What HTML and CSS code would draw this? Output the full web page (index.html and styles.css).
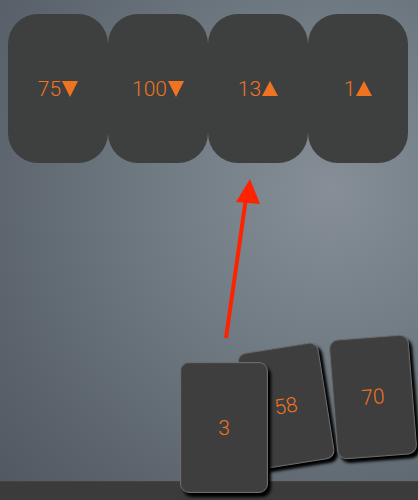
FILE: index.html
```html
<!DOCTYPE html>
<html>
<head>
<meta charset="utf-8">
<link rel="stylesheet" href="styles.css">
</head>
<body>
<div class="table">
  <div class="slots">
    <div class="slot"><span class="num">75</span><span class="tri down"></span></div>
    <div class="slot"><span class="num">100</span><span class="tri down"></span></div>
    <div class="slot"><span class="num">13</span><span class="tri up"></span></div>
    <div class="slot"><span class="num">1</span><span class="tri up"></span></div>
  </div>
  <svg class="arrow" width="418" height="500" viewBox="0 0 418 500">
    <line x1="226" y1="338" x2="246" y2="198" stroke="#ff2200" stroke-width="4"/>
    <polygon points="250,179 236,202 260,204" fill="#ff2200"/>
  </svg>
  <div class="card c58"><span>58</span></div>
  <div class="card c70"><span>70</span></div>
  <div class="card c3"><span>3</span></div>
</div>
<div class="floor"></div>
</body>
</html>
```
FILE: styles.css
```css
html, body {
  margin: 0;
  padding: 0;
}
body {
  width: 418px;
  height: 500px;
  overflow: hidden;
  display: flex;
  flex-direction: column;
  font-family: Roboto, "Liberation Sans", sans-serif;
  background: radial-gradient(circle 560px at 330px 190px, #868f97 0%, #717b84 30%, #5b646d 62%, #434950 100%);
}
.table {
  position: relative;
  flex: 1;
}
.slots {
  display: flex;
  padding: 14px 0 0 8px;
}
.slot {
  width: 100px;
  height: 149px;
  border-radius: 30px;
  background: #3e403f;
  display: flex;
  align-items: center;
  justify-content: center;
  color: #f07322;
  font-size: 21px;
  font-weight: 300;
}
.num {
  line-height: 1;
  margin-top: 1px;
}
.tri {
  width: 0;
  height: 0;
  border-left: 8px solid transparent;
  border-right: 8px solid transparent;
  margin-left: 1px;
}
.tri.down {
  border-top: 16px solid #f07322;
}
.tri.up {
  border-bottom: 15px solid #f07322;
}
.arrow {
  position: absolute;
  left: 0;
  top: 0;
  pointer-events: none;
}
.card {
  position: absolute;
  box-sizing: border-box;
  background: #3d3e3d;
  border: 1px solid #6b6c6b;
  border-radius: 9px;
  box-shadow: inset 0 0 0 1px #434443, 3px 4px 3px #000;
  display: flex;
  align-items: center;
  justify-content: center;
  color: #f07322;
  font-size: 21px;
  font-weight: 300;
}
.c3 {
  left: 180px;
  top: 362px;
  width: 88px;
  height: 131px;
}
.c58 {
  left: 245px;
  top: 347px;
  width: 82px;
  height: 118px;
  transform: rotate(-9deg);
}
.c70 {
  left: 333px;
  top: 337px;
  width: 80px;
  height: 120px;
  transform: rotate(-4.5deg);
}
.floor {
  height: 18px;
  background: #3a3b3a;
  border-top: 1px solid #424443;
}
```
